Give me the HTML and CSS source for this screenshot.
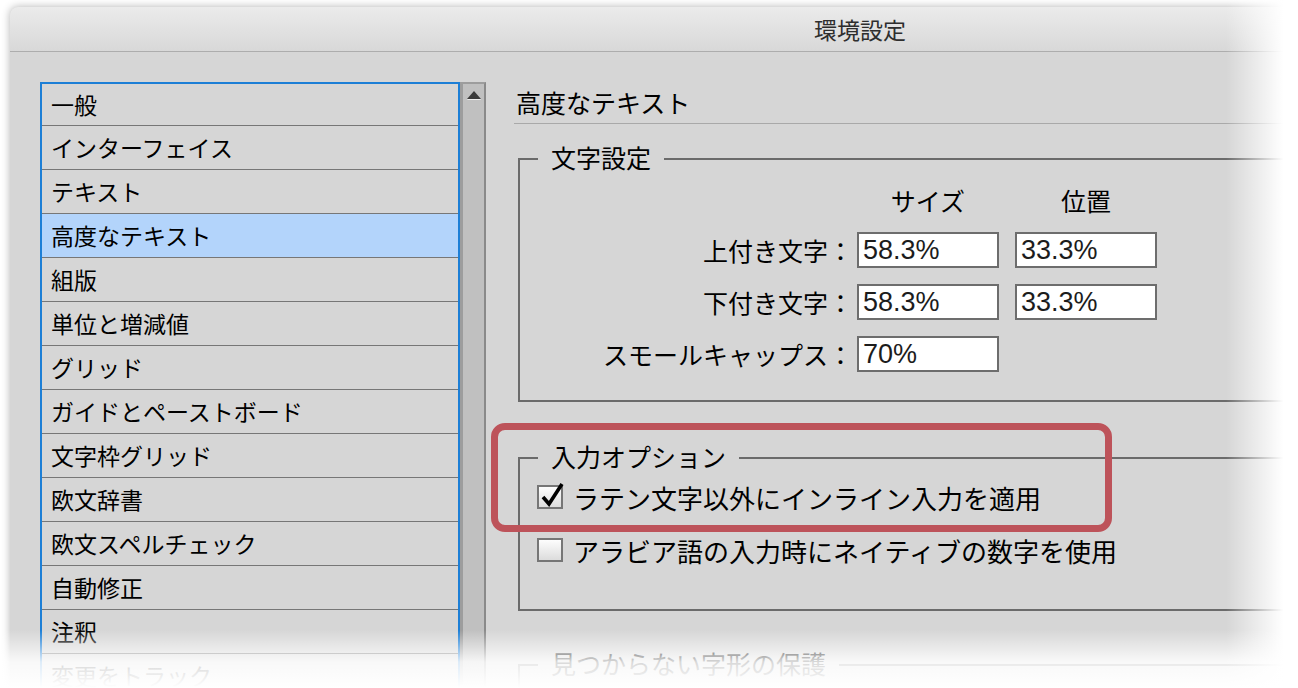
FILE: index.html
```html
<!DOCTYPE html>
<html lang="ja">
<head>
    <meta charset="UTF-8">
    <meta name="viewport" content="width=device-width, initial-scale=1.0">
    <title>環境設定</title>
    <link rel="stylesheet" href="styles.css">
</head>
<body>
    <div class="window">
        <div class="titlebar">環境設定</div>
        <div class="main">
            <div class="sidebar">
                <ul class="cats">
                    <li>一般</li>
                    <li>インターフェイス</li>
                    <li>テキスト</li>
                    <li class="selected">高度なテキスト</li>
                    <li>組版</li>
                    <li>単位と増減値</li>
                    <li>グリッド</li>
                    <li>ガイドとペーストボード</li>
                    <li>文字枠グリッド</li>
                    <li>欧文辞書</li>
                    <li>欧文スペルチェック</li>
                    <li>自動修正</li>
                    <li>注釈</li>
                    <li>変更をトラック</li>
                    <li>ストーリーエディター表示</li>
                </ul>
                <div class="scrollbar"><span class="arrow-up"></span></div>
            </div>

            <div class="pane">
                <h2 class="pane-title">高度なテキスト</h2>

                <fieldset class="group">
                    <legend>文字設定</legend>
                    <div class="char-grid">
                        <span></span>
                        <span class="col-head">サイズ</span>
                        <span class="col-head">位置</span>

                        <label class="row-label" for="supSize">上付き文字：</label>
                        <input class="field" type="text" id="supSize" value="58.3%">
                        <input class="field" type="text" id="supPos" value="33.3%">

                        <label class="row-label" for="subSize">下付き文字：</label>
                        <input class="field" type="text" id="subSize" value="58.3%">
                        <input class="field" type="text" id="subPos" value="33.3%">

                        <label class="row-label" for="smallCaps">スモールキャップス：</label>
                        <input class="field" type="text" id="smallCaps" value="70%">
                        <span></span>
                    </div>
                </fieldset>

                <fieldset class="group options">
                    <legend>入力オプション</legend>
                    <div class="check-row">
                        <span class="checkbox">
                            <svg class="tick" width="26" height="26" viewBox="0 0 26 26">
                                <path d="M5 12 L11 19 L24 -1" fill="none" stroke="#000" stroke-width="3.6" stroke-linejoin="miter"/>
                            </svg>
                        </span>
                        <span>ラテン文字以外にインライン入力を適用</span>
                    </div>
                    <div class="check-row">
                        <span class="checkbox"></span>
                        <span>アラビア語の入力時にネイティブの数字を使用</span>
                    </div>
                </fieldset>

                <fieldset class="group glyphs">
                    <legend>見つからない字形の保護</legend>
                </fieldset>
            </div>
        </div>
    </div>

    <div class="highlight"></div>
    <div class="fade-right"></div>
    <div class="fade-bottom"></div>
</body>
</html>
```

FILE: styles.css
```css
html, body { margin: 0; height: 688px; overflow: hidden; background: #fff; }
body { font-family: "Noto Sans CJK JP", "Noto Sans", sans-serif; color: #000; position: relative; }

.window {
    margin: 7px 0 0 10px;
    width: 1700px;
    height: 820px;
    background: #d6d6d6;
    border-radius: 8px 8px 0 0;
    box-shadow: 0 0 9px rgba(0, 0, 0, 0.3);
}
.titlebar {
    height: 44px;
    line-height: 44px;
    text-align: center;
    font-size: 23px;
    color: #2e2e2e;
    background: linear-gradient(#ebebeb, #d8d8d8);
    border-bottom: 1px solid #adadad;
    border-radius: 8px 8px 0 0;
}
.main { display: flex; padding-top: 30px; }

/* left list */
.sidebar { display: flex; margin-left: 30px; height: 720px; }
.cats {
    list-style: none;
    margin: 0;
    padding: 0;
    width: 416px;
    border: 2px solid #1d7fd6;
    border-bottom: none;
}
.cats li {
    height: 43px;
    line-height: 43px;
    padding-left: 9px;
    font-size: 23px;
    border-bottom: 1px solid #777;
}
.cats li:first-child { height: 41px; line-height: 41px; }
.cats li.selected { background: #b3d4fb; }
.scrollbar {
    width: 21px;
    background: #c0c0c0;
    border-left: 3px solid #9d9d9d;
    border-right: 2px solid #8a8a8a;
    border-top: 2px solid #9d9d9d;
}
.arrow-up {
    display: block;
    width: 0;
    height: 0;
    margin: 7px auto 0;
    border-left: 7px solid transparent;
    border-right: 7px solid transparent;
    border-bottom: 8px solid #3b3b3b;
    filter: drop-shadow(0 1px 0 #eee);
}

/* right pane */
.pane { flex: 1; padding-left: 30px; }
.pane-title {
    margin: 0;
    height: 41px;
    line-height: 41px;
    font-size: 25px;
    font-weight: normal;
    margin-left: -2px;
    padding-left: 2px;
    border-bottom: 1px solid #a9a9a9;
}
.group {
    margin: 19px 0 0 2px;
    padding: 0 0 28px;
    border: 2px solid #6b6b6b;
    min-width: 0;
}
.group legend {
    margin-left: 18px;
    padding: 0 13px 3px;
    font-size: 25px;
    line-height: 28px;
}
.char-grid {
    display: grid;
    grid-template-columns: 337px 158px 142px;
    row-gap: 16px;
    margin-top: 10px;
    align-items: center;
}
.col-head { width: 142px; text-align: center; font-size: 25px; line-height: 32px; }
.row-label { text-align: right; font-size: 25px; line-height: 36px; padding-right: 4px; }
.field {
    box-sizing: border-box;
    width: 142px;
    height: 36px;
    margin: 0;
    padding: 0 4px;
    border: 2px solid #6d6d6d;
    border-radius: 0;
    background: #fff;
    color: #1c1c1c;
    font-family: "Liberation Sans", Arial, sans-serif;
    font-size: 27px;
}

.options { margin-top: 40px; padding-bottom: 41px; }
.check-row {
    display: flex;
    align-items: center;
    gap: 10px;
    height: 36px;
    margin-left: 17px;
    font-size: 26px;
}
.options .check-row:first-of-type { margin-top: 6px; }
.check-row + .check-row { margin-top: 17px; }
.checkbox {
    position: relative;
    box-sizing: border-box;
    width: 26px;
    height: 24px;
    border: 2px solid #767676;
    background: linear-gradient(#fdfdfd, #dcdcdc);
}
.tick { position: absolute; left: -1px; top: -2px; overflow: visible; }

.glyphs { margin-top: 38px; height: 80px; }

/* annotation + photo fades */
.highlight {
    position: absolute;
    left: 491px;
    top: 423px;
    width: 621px;
    height: 109px;
    box-sizing: border-box;
    border: 7px solid #bd535a;
    border-radius: 14px;
}
.fade-right {
    position: absolute;
    top: 0;
    right: 0;
    width: 72px;
    height: 688px;
    background: linear-gradient(to right, rgba(255, 255, 255, 0), #fff 80%);
}
.fade-bottom {
    position: absolute;
    left: 0;
    bottom: 0;
    width: 1298px;
    height: 58px;
    background: linear-gradient(rgba(255, 255, 255, 0), rgba(255, 255, 255, 0.85) 55%, #fff);
}
```
